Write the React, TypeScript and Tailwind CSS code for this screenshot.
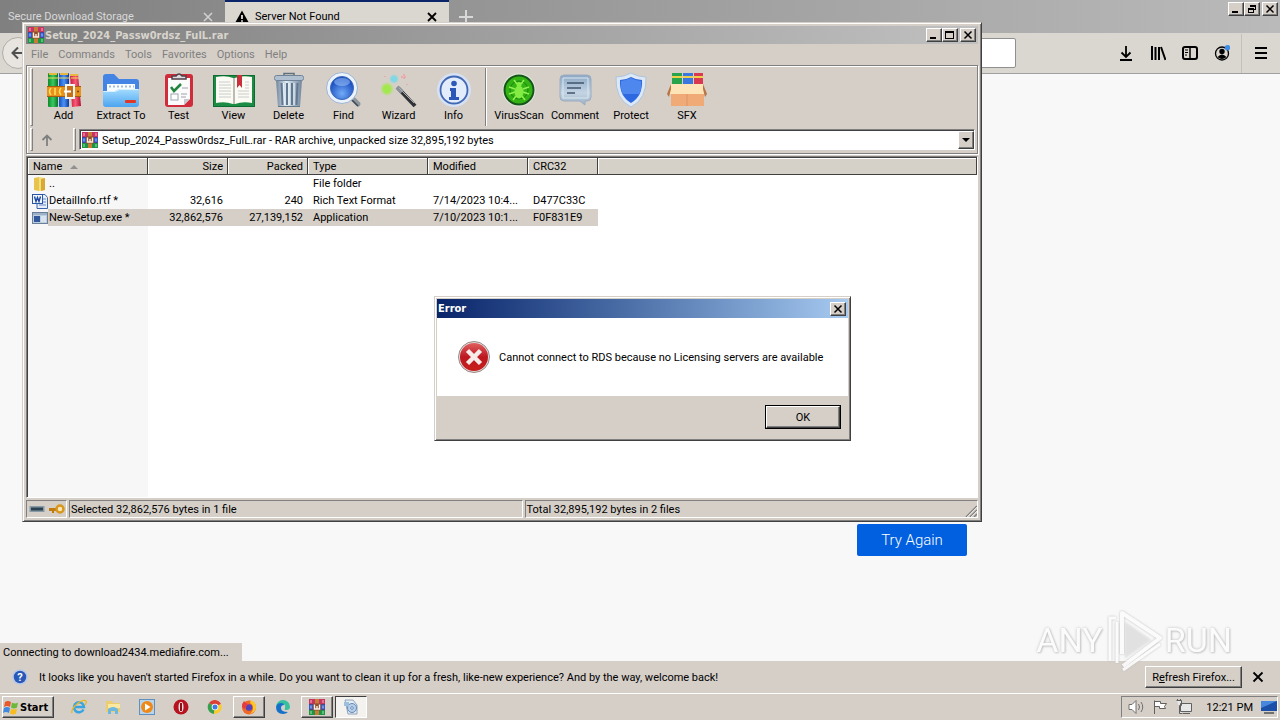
import React from "react";

const face = "bg-[#d5cfc8]";
const boldFace = "font-['DejaVu_Sans_Condensed','DejaVu_Sans',sans-serif] text-[11px] font-bold";
const raised =
  "border border-t-white border-l-white border-r-[#404040] border-b-[#404040] shadow-[inset_-1px_-1px_0_#808080] bg-[#d5cfc8]";
const frame =
  "border border-t-[#d5cfc8] border-l-[#d5cfc8] border-r-[#404040] border-b-[#404040] shadow-[inset_1px_1px_0_#fff,inset_-1px_-1px_0_#808080] bg-[#d5cfc8]";
const sunken = "border border-t-[#808080] border-l-[#808080] border-r-white border-b-white";

type IconProps = { className?: string };

function RarIcon({ className = "size-4" }: IconProps) {
  return (
    <svg viewBox="0 0 16 16" className={className} aria-hidden="true">
      <rect width="16" height="16" fill="#5a3560" />
      <rect x="0" y="0" width="16" height="5" fill="#c83462" />
      <rect x="0" y="5.500" width="16" height="5" fill="#3558c8" />
      <rect x="0" y="11" width="16" height="5" fill="#1e9444" />
      <path d="M2 1v3M14 1v3" stroke="#f0a0b8" strokeWidth="1.200" />
      <path d="M2 6.500v3M14 6.500v3" stroke="#98b4f8" strokeWidth="1.200" />
      <path d="M2 12v3M14 12v3" stroke="#84dc98" strokeWidth="1.200" />
      <rect x="6" y="0" width="4" height="16" fill="#c87c34" />
      <rect x="4" y="4.500" width="8" height="7" fill="#8c4c2c" />
      <path d="M5.500 5.500v4.500h5V5.500M8 7v3" fill="none" stroke="#fcf0e4" strokeWidth="1.400" />
    </svg>
  );
}

function AddIcon() {
  return (
    <svg viewBox="0 0 36 36" className="size-9" aria-hidden="true">
      <defs>
        <linearGradient id="bg1"><stop stopColor="#0c8a2c" /><stop offset=".5" stopColor="#3cc860" /><stop offset="1" stopColor="#087424" /></linearGradient>
        <linearGradient id="bb1"><stop stopColor="#1450c4" /><stop offset=".5" stopColor="#4a94f4" /><stop offset="1" stopColor="#1038a0" /></linearGradient>
        <linearGradient id="br1"><stop stopColor="#c41838" /><stop offset=".5" stopColor="#f85a78" /><stop offset="1" stopColor="#b01030" /></linearGradient>
      </defs>
      <rect x="2" y="1" width="10" height="34" rx="1" fill="url(#bg1)" />
      <rect x="13" y="1" width="10" height="34" rx="1" fill="url(#bb1)" />
      <path d="M24 2h8l3 32-9 1z" fill="url(#br1)" />
      <path d="M3 1h8v2H3zM14 1h8v2h-8zM24 2h8v2h-8z" fill="#e8b83c" />
      <path d="M2 6h10M13 6h10M25 6h8" stroke="#f4dc60" />
      <path d="M1 14h34v11H1z" fill="#e8921c" />
      <path d="M1 14.500h34M1 24.500h34" stroke="#a45c10" />
      <path d="M5 16q-3 3.500 0 7M9 16v7M15 16q-3 3.500 0 7" stroke="#ffe060" strokeWidth="1.500" fill="none" />
      <rect x="20" y="13" width="8" height="13" fill="#c47018" stroke="#f4f4f4" strokeWidth="2" />
      <path d="M18 19.500h7" stroke="#fff" strokeWidth="2" />
      <circle cx="32" cy="19.500" r="1" fill="#7a3c08" />
    </svg>
  );
}
function ExtractIcon() {
  return (
    <svg viewBox="0 0 38 36" className="h-9 w-[38px]" aria-hidden="true">
      <defs><linearGradient id="fo" x2="0" y2="1"><stop stopColor="#a4dcfe" /><stop offset="1" stopColor="#4ca4f0" /></linearGradient></defs>
      <path d="M1 5q0-3 3-3h8l5 5h17q3 0 3 3v20H1z" fill="#4484e4" />
      <path d="M5 12h28v14H5z" fill="#f8fcff" />
      <path d="M7 14.500h25" stroke="#a4bcd8" strokeWidth="2" strokeDasharray="2 2" />
      <path d="M1 19h12l4-2h20v15q0 3-3 3H4q-3 0-3-3z" fill="url(#fo)" />
      <path d="M1.500 19.500h12l4-2H36" stroke="#d8f0ff" fill="none" />
      <rect x="23" y="28" width="11" height="3" rx="1" fill="#e03828" />
    </svg>
  );
}
function TestIcon() {
  return (
    <svg viewBox="0 0 30 36" className="h-9 w-[30px]" aria-hidden="true">
      <rect x="1" y="2" width="28" height="33" rx="3" fill="#d02c3c" />
      <path d="M4 6h22v21l-6 6H4z" fill="#fbfbfb" />
      <path d="M26 27h-6v6z" fill="#c8c8d0" />
      <path d="M8 7V4h4q3-4 6 0h4v3z" fill="#dcdce0" stroke="#504048" strokeWidth="1.500" />
      <path d="M7 15l3 4 7-7" stroke="#20843c" strokeWidth="2.500" fill="none" />
      <rect x="7" y="22" width="7" height="6" fill="#fff" stroke="#a0a8b0" />
      <path d="M18 16h6M17 22h6M17 25h5" stroke="#a0a0ac" />
    </svg>
  );
}
function ViewIcon() {
  return (
    <svg viewBox="0 0 44 36" className="h-9 w-11" aria-hidden="true">
      <path d="M1 3h42v32H1z" fill="#1c8c44" />
      <path d="M1.500 3.500h41v31h-41z" stroke="#0a6c30" fill="none" />
      <path d="M4 5q10-2 17 1v26q-8-3-17-1zM40 5q-10-2-17 1v26q8-3 17-1z" fill="#fbfbf4" />
      <path d="M22 6v26" stroke="#bcbcb4" strokeWidth="2" />
      <path d="M7 10h11M7 13h12M7 16h12M7 19h12M7 22h12M7 25h12M26 19h11M26 22h11M26 25h11M33 10h4M33 13h4M33 16h4" stroke="#c8cccc" />
      <path d="M25 3h5v13l-2.500-3L25 16z" fill="#c8303c" />
    </svg>
  );
}
function DeleteIcon() {
  return (
    <svg viewBox="0 0 32 36" className="h-9 w-8" aria-hidden="true">
      <defs><linearGradient id="tr"><stop stopColor="#70849c" /><stop offset=".4" stopColor="#e0ecf4" /><stop offset="1" stopColor="#70849c" /></linearGradient></defs>
      <path d="M11 3.500V1.500h10v2" stroke="#607080" fill="none" strokeWidth="1.500" />
      <path d="M3 8h26l-2 27H5z" fill="url(#tr)" />
      <path d="M8.500 11l1 22M14 11v22M19 11v22M24.500 11l-1 22" stroke="#607890" strokeWidth="2" />
      <path d="M10.500 11l1 22M16 11v22M21 11v22" stroke="#edf6fb" />
      <rect x="1.500" y="3.500" width="29" height="5" rx="2" fill="#b0c0d0" stroke="#708498" />
      <path d="M5 34.500h22" stroke="#607888" />
    </svg>
  );
}
function FindIcon() {
  return (
    <svg viewBox="0 0 36 36" className="size-9" aria-hidden="true">
      <defs><radialGradient id="fi" cy=".7"><stop stopColor="#72acf8" /><stop offset="1" stopColor="#1c50c0" /></radialGradient></defs>
      <path d="M25 25l7 7" stroke="#8c949c" strokeWidth="5" strokeLinecap="round" />
      <path d="M25 27l7 7" stroke="#404850" strokeWidth="1.500" />
      <circle cx="16" cy="16" r="13.500" fill="url(#fi)" stroke="#eaf2fc" strokeWidth="4" />
      <circle cx="16" cy="16" r="11.500" fill="none" stroke="#3c68b8" />
      <circle cx="16" cy="16" r="15.500" fill="none" stroke="#a0b4d0" />
      <ellipse cx="16" cy="10" rx="8" ry="4" fill="#a8ccff" opacity=".5" />
    </svg>
  );
}
function WizardIcon() {
  return (
    <svg viewBox="0 0 36 36" className="size-9" aria-hidden="true">
      <defs>
        <radialGradient id="wg"><stop stopColor="#a4e850" /><stop offset=".5" stopColor="#a4e850" /><stop offset="1" stopColor="#a4e850" stopOpacity="0" /></radialGradient>
        <radialGradient id="wb"><stop stopColor="#80d8e4" /><stop offset=".5" stopColor="#80d8e4" /><stop offset="1" stopColor="#80d8e4" stopOpacity="0" /></radialGradient>
      </defs>
      <path d="M17 16L34 34" stroke="#303236" strokeWidth="4" />
      <path d="M16 15l5 5" stroke="#8c9098" strokeWidth="4" />
      <path d="M18 16L33 31" stroke="#a8acb4" />
      <circle cx="6" cy="17" r="7" fill="url(#wg)" />
      <circle cx="13" cy="7" r="5" fill="url(#wb)" />
      <path d="M23 2v6M20 5h6M4 4v1M26 12v1" stroke="#f0a0a4" strokeWidth="1.500" strokeDasharray="2 1" />
    </svg>
  );
}
function InfoIcon() {
  return (
    <svg viewBox="0 0 36 36" className="size-9" aria-hidden="true">
      <circle cx="18" cy="18" r="17" fill="#d6e1f4" />
      <circle cx="18" cy="18" r="13.500" fill="#e2ecfa" stroke="#4068b4" strokeWidth="1.800" />
      <circle cx="18" cy="11.500" r="2.800" fill="#2c58b8" />
      <path d="M14 16h6v9h3v3H13v-3h2v-6h-1z" fill="#2c58b8" />
    </svg>
  );
}
function VirusIcon() {
  return (
    <svg viewBox="0 0 36 36" className="size-9" aria-hidden="true">
      <circle cx="18" cy="18" r="16.500" fill="#e4ecdf" />
      <circle cx="18" cy="18" r="14.500" fill="#34b414" stroke="#17551b" strokeWidth="2" />
      <circle cx="18" cy="18" r="9" fill="none" stroke="#188410" />
      <g stroke="#92f052" strokeWidth="1.500" fill="none">
        <path d="M13 8l3 4M23 8l-3 4M8 15l6 2M28 15l-6 2M8 22l6-2M28 22l-6-2M12 28l3-4M24 28l-3-4" />
      </g>
      <circle cx="18" cy="12.500" r="2.500" fill="#84ea44" />
      <ellipse cx="18" cy="20" rx="4.500" ry="6.500" fill="#84ea44" />
    </svg>
  );
}
function CommentIcon() {
  return (
    <svg viewBox="0 0 36 36" className="size-9" aria-hidden="true">
      <defs><linearGradient id="co" x2="0" y2="1"><stop stopColor="#8ca8c4" /><stop offset=".6" stopColor="#c4d4e4" /><stop offset="1" stopColor="#9cb0c4" /></linearGradient></defs>
      <path d="M7 3h23q4 0 4 4v18q0 4-4 4h-2v4l-5-4H7q-4 0-4-4V7q0-4 4-4z" fill="url(#co)" stroke="#9cacc0" />
      <path d="M6 6h25v20H6z" fill="none" stroke="#dae8f2" />
      <path d="M10 11h17M10 16h14M10 21h8" stroke="#40546c" strokeWidth="1.500" />
    </svg>
  );
}
function ProtectIcon() {
  return (
    <svg viewBox="0 0 36 36" className="size-9" aria-hidden="true">
      <path d="M18 1q7 4 15 4 1 22-15 30Q2 27 3 5q8 0 15-4z" fill="#dce8f6" stroke="#b0c4dc" />
      <path d="M18 5q5 3 11 3 1 16-11 23Q6 24 7 8q6 0 11-3z" fill="#2d68e0" />
      <path d="M18 6q5 3 10 3 1 9-2 13H10Q7 17 8 9q6-1 10-3z" fill="#5c94f4" opacity=".7" />
    </svg>
  );
}
function SfxIcon() {
  return (
    <svg viewBox="0 0 40 36" className="h-9 w-10" aria-hidden="true">
      <path d="M5 1h10v14H5z" fill="#28a44c" /><path d="M16 1h10v14H16z" fill="#3a78e0" /><path d="M27 1h9v14h-9z" fill="#d83850" />
      <path d="M5 5h10M16 5h10M27 5h9" stroke="#f0d048" strokeWidth="2" />
      <path d="M4 16h33v18H4z" fill="#f0aa78" />
      <path d="M4 12h32l3 10H1z" fill="#fce4b8" />
      <path d="M4 12L0 22l2 3 2-8zM36 12l4 10-2 3-2-8z" fill="#b87444" />
      <path d="M20 22v12" stroke="#dc9464" />
    </svg>
  );
}

const tools = [
  { label: "Add", icon: AddIcon },
  { label: "Extract To", icon: ExtractIcon, wide: true },
  { label: "Test", icon: TestIcon },
  { label: "View", icon: ViewIcon },
  { label: "Delete", icon: DeleteIcon },
  { label: "Find", icon: FindIcon },
  { label: "Wizard", icon: WizardIcon },
  { label: "Info", icon: InfoIcon },
];
const extras = [
  { label: "VirusScan", icon: VirusIcon },
  { label: "Comment", icon: CommentIcon },
  { label: "Protect", icon: ProtectIcon },
  { label: "SFX", icon: SfxIcon },
];

function ToolButton({ label, icon: Icon, width }: { label: string; icon: () => React.ReactElement; width: string }) {
  return (
    <button className={`flex flex-col items-center whitespace-nowrap ${width}`}>
      <Icon />
      <span className="leading-4">{label}</span>
    </button>
  );
}

function CaptionButton({ kind, label }: { kind: "min" | "max" | "restore" | "close"; label: string }) {
  return (
    <button aria-label={label} className={`flex h-3.5 w-4 items-center justify-center ${raised}`}>
      <svg viewBox="0 0 12 10" className="h-2.5 w-3" fill="none" stroke="#000" shapeRendering="crispEdges" aria-hidden="true">
        {kind === "min" && <path d="M2 8h6" strokeWidth="2" />}
        {kind === "max" && <path d="M1.500 1.500h8v7h-8zM1 2h9" />}
        {kind === "restore" && <path d="M4.500 3V1.500h5v4H8M4 2h6M2.500 4.500h5v4h-5zM2 5h6" />}
        {kind === "close" && <path d="M2.500 1.500l7 7M9.500 1.500l-7 7" strokeWidth="1.500" shapeRendering="auto" />}
      </svg>
    </button>
  );
}

function Grip() {
  return <span className="w-[3px] self-stretch border border-t-white border-l-white border-r-[#808080] border-b-[#808080]" />;
}

function FolderIcon() {
  return (
    <svg viewBox="0 0 16 16" className="size-4" aria-hidden="true">
      <path d="M2 2l5-1v14l-5-1z" fill="#e8c44c" /><path d="M7 1l6 1v12l-6 1z" fill="#f6de7c" /><path d="M9 3l4-1v12l-4 1z" fill="#d8aa34" />
    </svg>
  );
}
function DocIcon() {
  return (
    <svg viewBox="0 0 16 16" className="size-4" aria-hidden="true">
      <path d="M5 1.500h8l2.500 3v11H5z" fill="#e8f0fc" stroke="#3c64a8" />
      <path d="M11 6h3M11 9h3M7 12h7" stroke="#6888c0" />
      <rect x=".5" y="1.500" width="10" height="9" fill="#f4f8ff" stroke="#2c56a4" />
      <path d="M2.500 3.500l1.500 5 1.500-4 1.500 4 1.500-5" fill="none" stroke="#1c48a0" strokeWidth="1.400" />
    </svg>
  );
}
function ExeIcon() {
  return (
    <svg viewBox="0 0 16 16" className="size-4" aria-hidden="true">
      <rect x=".5" y="2.500" width="15" height="11" fill="#bed0e0" stroke="#6b8098" />
      <path d="M1 4h14" stroke="#90a8c0" strokeWidth="1.500" />
      <rect x="2" y="6" width="6" height="6" fill="#31589b" /><path d="M9 7h5M9 9h5M9 11h5" stroke="#f4f8fc" />
    </svg>
  );
}

const rows = [
  { name: "..", icon: FolderIcon, size: "", packed: "", type: "File folder", modified: "", crc: "" },
  { name: "DetailInfo.rtf *", icon: DocIcon, size: "32,616", packed: "240", type: "Rich Text Format", modified: "7/14/2023 10:4...", crc: "D477C33C" },
  { name: "New-Setup.exe *", icon: ExeIcon, size: "32,862,576", packed: "27,139,152", type: "Application", modified: "7/10/2023 10:1...", crc: "F0F831E9", selected: true },
];

function FileTable() {
  const head =
    "h-[17px] px-[5px] font-normal bg-[#d5d1c8] shadow-[inset_-1px_-1px_0_#404040,inset_1px_1px_0_#fff]";
  return (
    <table className="w-full table-fixed border-collapse text-left leading-[17px] whitespace-nowrap">
      <colgroup>
        <col className="w-[120px]" />
        <col className="w-20" />
        <col className="w-20" />
        <col className="w-[120px]" />
        <col className="w-[100px]" />
        <col className="w-[70px]" />
        <col />
      </colgroup>
      <thead>
        <tr>
          <th className={head}>
            <span className="flex items-center gap-2">
              Name
              <svg viewBox="0 0 8 4" className="h-1 w-2" aria-hidden="true"><path d="M0 4l4-4 4 4z" fill="#909090" /></svg>
            </span>
          </th>
          <th className={`${head} text-right`}>Size</th>
          <th className={`${head} text-right`}>Packed</th>
          <th className={head}>Type</th>
          <th className={head}>Modified</th>
          <th className={head}>CRC32</th>
          <td className={head} />
        </tr>
      </thead>
      <tbody>
        {rows.map(({ name, icon: Icon, size, packed, type, modified, crc, selected }) => {
          const cell = `h-[17px] px-[5px] ${selected ? face : ""}`;
          return (
            <tr key={name}>
              <td className="h-[17px] p-0 pl-1">
                <span className="flex h-[17px] items-center">
                  <Icon />
                  <span className={`h-full flex-1 pl-px ${selected ? face : ""}`}>{name}</span>
                </span>
              </td>
              <td className={`${cell} text-right`}>{size}</td>
              <td className={`${cell} text-right`}>{packed}</td>
              <td className={cell}>{type}</td>
              <td className={cell}>{modified}</td>
              <td className={cell}>{crc}</td>
              <td />
            </tr>
          );
        })}
      </tbody>
    </table>
  );
}

function ArchiveWindow() {
  return (
    <section aria-label="Archive" className={`absolute top-[22px] left-[22px] flex h-[500px] w-[960px] flex-col p-[3px] ${frame}`}>
      <header className="flex h-[18px] shrink-0 items-center bg-linear-to-r from-[#808080] to-[#c0c0c0] pl-0.5 text-[#d8d4cc]">
        <RarIcon />
        <h1 className={`flex-1 pl-px ${boldFace}`}>Setup_2024_Passw0rdsz_FulL.rar</h1>
        <div className="flex pr-0.5">
          <CaptionButton kind="min" label="Minimize" />
          <CaptionButton kind="max" label="Maximize" />
          <span className="w-0.5" />
          <CaptionButton kind="close" label="Close" />
        </div>
      </header>
      <nav className="flex h-[21px] shrink-0 items-center gap-2.5 pl-[5px] text-[#808080]">
        {["File", "Commands", "Tools", "Favorites", "Options", "Help"].map((m) => (
          <button key={m}>{m}</button>
        ))}
      </nav>
      <div className="flex shrink-0 flex-col border border-[#808080] shadow-[inset_1px_1px_0_#fff,1px_1px_0_#fff]">
        <div className="flex h-[62px] items-center py-0.5 pl-[3px]">
          <Grip />
          <div className="flex pt-px pl-[3px]">
            {tools.map((t) => (
              <ToolButton key={t.label} label={t.label} icon={t.icon} width={t.wide ? "w-[60px]" : "w-[55px]"} />
            ))}
          </div>
          <span className="mx-1 w-0.5 self-stretch border-r border-l border-r-white border-l-[#808080]" />
          <div className="flex pt-px">
            {extras.map((t) => (
              <ToolButton key={t.label} label={t.label} icon={t.icon} width="w-14" />
            ))}
          </div>
        </div>
        <div className="flex h-[25px] items-center pr-0.5 pb-0.5 pl-[3px]">
          <Grip />
          <button aria-label="Up one level" className="flex w-10 items-center pl-2">
            <svg viewBox="0 0 12 12" className="size-3" fill="none" stroke="#808080" strokeWidth="1.800" aria-hidden="true"><path d="M6 12V2M1.500 6L6 1.500 10.500 6" /></svg>
          </button>
          <Grip />
          <div className="relative ml-[3px] flex h-[21px] flex-1 items-center border border-t-[#808080] border-l-[#808080] border-r-white border-b-white bg-white pl-0.5 shadow-[inset_1px_1px_0_#404040]">
            <RarIcon />
            <select aria-label="Archive path" className="h-full flex-1 appearance-none bg-transparent pt-0.5 pl-1 outline-none">
              <option>Setup_2024_Passw0rdsz_FulL.rar - RAR archive, unpacked size 32,895,192 bytes</option>
            </select>
            <span className={`pointer-events-none absolute top-px right-0 flex h-[18px] w-4 items-center justify-center ${raised}`}>
              <svg viewBox="0 0 8 4" className="h-1 w-2" aria-hidden="true"><path d="M0 0h8L4 4z" /></svg>
            </span>
          </div>
        </div>
      </div>
      <div className="mt-0.5 flex min-h-0 flex-1 border border-t-[#808080] border-l-[#808080] border-r-white border-b-white">
        <div className="min-w-0 flex-1 border-t border-l border-[#404040] bg-[linear-gradient(90deg,#f7f7f7_120px,#fff_120px)]">
          <FileTable />
        </div>
      </div>
      <footer className="mt-0.5 flex h-[18px] shrink-0 gap-0.5">
        <div className={`flex w-[41px] items-center justify-center gap-1 ${sunken}`}>
          <svg viewBox="0 0 16 8" className="h-2 w-4" aria-hidden="true"><rect x=".5" y="1" width="15" height="6" fill="#8a9aa6" /><rect x="2" y="2.500" width="12" height="3" fill="#2b4252" /></svg>
          <svg viewBox="0 0 16 12" className="h-3 w-4" aria-hidden="true"><path d="M0 5h9v3H5v2H3V8H0z" fill="#c07c10" /><circle cx="11" cy="6" r="3.500" fill="#f8e8b8" stroke="#d8961c" strokeWidth="2.500" /></svg>
        </div>
        <div className={`flex flex-1 items-center pl-px ${sunken}`}>Selected 32,862,576 bytes in 1 file</div>
        <div className={`flex flex-1 items-center justify-between pl-px ${sunken}`}>
          Total 32,895,192 bytes in 2 files
          <svg viewBox="0 0 12 12" className="size-3 self-end" aria-hidden="true"><path d="M1 12L12 1M5 12l7-7M9 12l3-3" stroke="#808080" strokeWidth="1.500" /><path d="M2 12L12 2M6 12l6-6" stroke="#fff" strokeWidth=".7" /></svg>
        </div>
      </footer>
    </section>
  );
}

function ErrorDialog() {
  return (
    <section role="dialog" aria-labelledby="error-title" className={`absolute top-[296px] left-[434px] flex w-[417px] flex-col p-0.5 ${frame}`}>
      <header className="flex h-[19px] items-center justify-between bg-linear-to-r from-[#0a246a] to-[#a6caf0] pr-0.5 pl-px text-white">
        <h2 id="error-title" className={boldFace}>Error</h2>
        <CaptionButton kind="close" label="Close dialog" />
      </header>
      <div className="flex h-[78px] items-center gap-2 bg-white pl-5">
        <svg viewBox="0 0 34 34" className="size-[34px]" aria-hidden="true">
          <defs><linearGradient id="er" x2="0" y2="1"><stop stopColor="#e06060" /><stop offset=".5" stopColor="#bc1820" /><stop offset="1" stopColor="#c8201c" /></linearGradient></defs>
          <circle cx="17" cy="17" r="15.500" fill="#e2dcdc" stroke="#9c8888" />
          <circle cx="17" cy="17" r="14" fill="url(#er)" />
          <path d="M10.500 10.500l13 13M23.500 10.500l-13 13" stroke="#f8ece8" strokeWidth="4.500" />
        </svg>
        <p>Cannot connect to RDS because no Licensing servers are available</p>
      </div>
      <div className="flex h-[42px] items-center justify-end pr-[7px]">
        <button className="h-6 w-[76px] border border-black p-0">
          <span className={`flex h-full items-center justify-center ${raised}`}>OK</span>
        </button>
      </div>
    </section>
  );
}

function Browser() {
  return (
    <div className="flex flex-1 flex-col">
      <header className="flex h-[33px] shrink-0 bg-linear-to-r from-[#808080] to-[#bababa]">
        <div className="flex w-[225px] items-center justify-between pr-3 pl-2 text-[#d8d8d8]">
          <button>Secure Download Storage</button>
          <button aria-label="Close Secure Download Storage">
            <svg viewBox="0 0 10 10" className="size-2.5" stroke="#d0d0d0" strokeWidth="1.600" aria-hidden="true"><path d="M1 1l8 8M9 1L1 9" /></svg>
          </button>
        </div>
        <div className="flex w-56 items-center border-t-2 border-[#0a246a] bg-[#dad6d0] pr-3 pb-0.5 pl-2.5">
          <svg viewBox="0 0 14 14" className="size-3.5" aria-hidden="true"><path d="M7 .5L14 13H0z" /><path d="M7 5v4M7 10.200v1.500" stroke="#fff" strokeWidth="1.600" /></svg>
          <button className="flex-1 pl-1.5 text-left">Server Not Found</button>
          <button aria-label="Close Server Not Found">
            <svg viewBox="0 0 10 10" className="size-2.5" stroke="#000" strokeWidth="1.800" aria-hidden="true"><path d="M1 1l8 8M9 1L1 9" /></svg>
          </button>
        </div>
        <button aria-label="New tab" className="px-2.5">
          <svg viewBox="0 0 14 14" className="size-3.5" stroke="#d8d8d8" strokeWidth="2" aria-hidden="true"><path d="M7 0v14M0 7h14" /></svg>
        </button>
        <div className="ml-auto flex pt-0.5 pr-0.5">
          <CaptionButton kind="min" label="Minimize browser" />
          <CaptionButton kind="restore" label="Restore browser" />
          <span className="w-0.5" />
          <CaptionButton kind="close" label="Close browser" />
        </div>
      </header>
      <div className="flex h-[41px] shrink-0 items-center border-b border-[#a0a0a0] bg-[#dad6d0] pl-0.5">
        <button aria-label="Back" className="flex size-8 items-center justify-center rounded-full border border-[#b0aca6] bg-[#e8e5e1]">
          <svg viewBox="0 0 14 14" className="size-3.5" fill="none" stroke="#505050" strokeWidth="2" aria-hidden="true"><path d="M14 7H2M7 1.500L1.500 7 7 12.500" /></svg>
        </button>
        <input aria-label="Address" className="ml-[100px] h-[30px] flex-1 rounded-xs border border-[#909090] bg-white px-2 outline-none" />
        <div className="ml-[102px] flex items-center gap-4">
          <button aria-label="Downloads"><svg viewBox="0 0 16 16" className="size-4" fill="none" stroke="#000" strokeWidth="1.800" aria-hidden="true"><path d="M8 1v11M3.500 7.500L8 12l4.500-4.500M2 15h12" /></svg></button>
          <button aria-label="Library"><svg viewBox="0 0 16 16" className="size-4" fill="none" stroke="#000" strokeWidth="2" aria-hidden="true"><path d="M2 1v14M5.500 2v13M9 2v13M11 2l4.500 13" /></svg></button>
          <button aria-label="Sidebar"><svg viewBox="0 0 16 16" className="size-4" fill="none" stroke="#000" strokeWidth="2" aria-hidden="true"><rect x="1" y="2" width="14" height="12" rx="2" /><path d="M8 2v12" strokeWidth="1.500" /><path d="M3 5h3M3 7.500h3M3 10h2" strokeWidth="1" /></svg></button>
          <button aria-label="Account"><svg viewBox="0 0 16 16" className="size-4" aria-hidden="true"><circle cx="8" cy="8.500" r="6.500" fill="none" stroke="#000" strokeWidth="1.300" /><circle cx="8" cy="6.500" r="2.700" /><path d="M3.500 12q4.500-5 9 0-4.500 4-9 0z" /><circle cx="13.500" cy="2.800" r="2.700" fill="#3c8ce8" /></svg></button>
        </div>
        <div className="mr-3 ml-[11px] flex h-[39px] items-center border-l border-[#c4c0ba] pl-3">
          <button aria-label="Menu"><svg viewBox="0 0 14 14" className="size-3.5" stroke="#000" strokeWidth="2" aria-hidden="true"><path d="M1 2h12M1 7h12M1 12h12" /></svg></button>
        </div>
      </div>
      <main className="relative flex-1 bg-[#f8f8f8]">
        <div className="mx-auto flex max-w-[654px] justify-end pt-[450px]">
          <button className="h-8 w-[110px] rounded-xs bg-[#0060df] text-[15px] font-light text-white">Try Again</button>
        </div>
        <div className="absolute bottom-0 left-0 flex h-[18px] w-[242px] items-center bg-[#d5cfc8] pl-[3px]">Connecting to download2434.mediafire.com...</div>
      </main>
      <aside className={`flex h-8 shrink-0 items-center pr-4 pl-3 ${face}`}>
        <svg viewBox="0 0 16 16" className="size-4" aria-hidden="true">
          <circle cx="8" cy="8" r="7" fill="#2858b8" stroke="#b8c8e8" strokeWidth="1.500" />
          <text x="8" y="12" textAnchor="middle" fontSize="11" fontWeight="bold" fill="#fff">?</text>
        </svg>
        <p className="flex-1 pl-[11px]">It looks like you haven't started Firefox in a while. Do you want to clean it up for a fresh, like-new experience? And by the way, welcome back!</p>
        <button className={`mr-2.5 h-[22px] w-[97px] ${raised}`}>R<u>e</u>fresh Firefox...</button>
        <button aria-label="Dismiss"><svg viewBox="0 0 12 12" className="size-3" stroke="#000" strokeWidth="1.800" aria-hidden="true"><path d="M1.500 1.500l9 9M10.500 1.500l-9 9" /></svg></button>
      </aside>
    </div>
  );
}

function Watermark() {
  return (
    <div className="pointer-events-none absolute right-12 bottom-[46px] flex h-[68px] items-center font-[Roboto,sans-serif] text-[34px] leading-10 font-normal text-[#fcfcfc] opacity-90 [text-shadow:0_0_3px_#b8b8b8,1px_1px_2px_#c8c8c8]">
      <span>ANY</span>
      <svg viewBox="0 0 62 68" className="h-[68px] w-[62px] drop-shadow-[0_0_1px_#b8b8b8]" fill="none" stroke="#fcfcfc" aria-hidden="true">
        <path d="M19 48V7l38 25-37 28" strokeWidth="4" strokeLinejoin="round" />
        <path d="M7 55V12h6M14 16v41M20 64l37-26" strokeWidth="3" />
        <path d="M22 52l26-18-26-18z" stroke="none" fill="#e6e6e6" opacity=".5" />
      </svg>
      <span>RUN</span>
    </div>
  );
}

function Taskbar() {
  return (
    <footer className={`flex h-[27px] shrink-0 items-center border-t border-white pr-0.5 pl-0.5 ${face}`}>
      <button className={`flex h-[22px] w-[52px] items-center gap-px ${boldFace} ${raised}`}>
        <svg viewBox="0 0 16 16" className="size-4 shrink-0" aria-hidden="true">
          <path d="M2 3q3-2 6 0L7 8Q4 6 1 8z" fill="#e8582c" /><path d="M9 3.500q3 2 6 0l-1 5q-3 2-6 0z" fill="#6cb838" />
          <path d="M1 9q3-2 6 0l-1 5q-3-2-6 0z" fill="#4088e0" /><path d="M8 9.500q3 2 6 0l-1 5q-3 2-6 0z" fill="#f8bc1c" />
        </svg>
        Start
      </button>
      <div className="flex items-center gap-[18px] pl-[17px]">
        <button aria-label="Internet Explorer"><svg viewBox="0 0 16 16" className="size-4" aria-hidden="true"><path d="M12.500 10.500A5 5 0 1 1 13 8H4" fill="none" stroke="#38a4e4" strokeWidth="2.500" /><path d="M1 14Q0 10 6 5T15 2q1 1-1 4" fill="none" stroke="#e8b820" strokeWidth="1.300" /></svg></button>
        <button aria-label="Explorer"><svg viewBox="0 0 16 16" className="size-4" aria-hidden="true"><path d="M1 2h6l1 2h7v9H1z" fill="#eccc6c" /><path d="M3 5h12v4H3z" fill="#f8e8a0" /><path d="M3 15V10q5-4 10 0v5h-3v-3H6v3z" fill="#6cb8e0" /></svg></button>
        <button aria-label="Media Player"><svg viewBox="0 0 16 16" className="size-4" aria-hidden="true"><rect x=".5" y=".5" width="15" height="15" fill="#b8d4ec" stroke="#6090bc" /><circle cx="8" cy="8" r="6" fill="#f08818" /><path d="M6 4.500L11.500 8 6 11.500z" fill="#fff" /></svg></button>
        <button aria-label="Opera"><svg viewBox="0 0 16 16" className="size-4" aria-hidden="true"><circle cx="8" cy="8" r="7.500" fill="#b81420" /><ellipse cx="8" cy="8" rx="2.500" ry="5" fill="#f4e0e0" /><path d="M8 4v8" stroke="#8c1018" strokeWidth="2" /></svg></button>
        <button aria-label="Chrome"><svg viewBox="0 0 16 16" className="size-4" aria-hidden="true"><path d="M8 8L2 4a7 7 0 0 1 12 1z" fill="#dc4034" /><path d="M8 8L2 4a7 7 0 0 0 5 11z" fill="#38a04c" /><path d="M8 8l6-3a7 7 0 0 1-7 10z" fill="#f8cc30" /><circle cx="8" cy="8" r="3.300" fill="#fff" /><circle cx="8" cy="8" r="2.500" fill="#3c7ce4" /></svg></button>
      </div>
      <button aria-label="Firefox" className={`ml-2.5 flex h-[22px] w-8 items-center justify-center ${raised}`}>
        <svg viewBox="0 0 16 16" className="size-4" aria-hidden="true"><circle cx="8" cy="8.500" r="7" fill="#f06828" /><path d="M10 1q6 3 5 8t-7 6q4-2 4-6t-3-5z" fill="#fcc82c" /><circle cx="8" cy="8.500" r="3.300" fill="#5440b8" /><path d="M1 8q0-4 2-6 1 2 4 3L5 8l-2 2z" fill="#e43c40" /></svg>
      </button>
      <button aria-label="Edge" className="ml-2.5">
        <svg viewBox="0 0 16 16" className="size-4" aria-hidden="true"><path d="M1 8a7 7 0 0 1 14 0q0 3-4 3-2 0-1-2 1-4-3-4-5 0-6 3z" fill="#36c0a0" /><path d="M1 8q1-4 5-4 3 0 3 2-3 0-3 3 0 4 7 4-2 2-5 2-7 0-7-7z" fill="#1670c8" /></svg>
      </button>
      <button aria-label="WinRAR" className={`ml-2.5 flex h-[22px] w-8 items-center justify-center ${raised}`}><RarIcon /></button>
      <button aria-label="Setup" className="ml-0.5 flex h-[22px] w-8 items-center justify-center border border-t-[#404040] border-l-[#404040] border-r-white border-b-white bg-[#f4f2ef]">
        <svg viewBox="0 0 16 16" className="size-4" aria-hidden="true"><path d="M2 1h8l4 5v9H5z" fill="#e4ecf4" stroke="#90a4bc" /><circle cx="9" cy="9" r="4.500" fill="#b4d0ec" stroke="#6888b4" /><circle cx="9" cy="9" r="1.300" fill="#fff" stroke="#6888b4" /><path d="M1 3h5v4H1z" fill="#9cc0dc" /></svg>
      </button>
      <div className={`ml-auto flex h-[22px] items-center pl-1.5 ${sunken}`}>
        <svg viewBox="0 0 16 16" className="size-4" fill="#fff" stroke="#707070" aria-hidden="true"><path d="M1 5.500h3l4-4v13l-4-4H1z" /><path d="M10.500 5q2 3 0 6M13 3q3.500 5 0 10" fill="none" /></svg>
        <svg viewBox="0 0 16 16" className="ml-2 size-4" fill="#fff" stroke="#606060" aria-hidden="true"><path d="M2.500 15V1.500M2.500 2.500h6v2h6l-2 3 1 2h-6v-2h-5" /></svg>
        <svg viewBox="0 0 16 16" className="ml-2 size-4" fill="#e8e8e8" stroke="#606060" aria-hidden="true"><path d="M4.500 4.500h11v8h-11zM7 14.500h7M.5 1.500h5v5h-2v8h3M1.500 0v2M4.500 0v2" /></svg>
        <time className="ml-3.5 whitespace-nowrap">12:21 PM</time>
        <svg viewBox="0 0 16 14" className="ml-2 h-3.5 w-4" aria-hidden="true"><rect y="1" width="16" height="10" fill="#1c50a8" /><path d="M0 1h16L0 8z" fill="#4888dc" /><path d="M3 13h10" stroke="#707070" strokeWidth="2" /></svg>
      </div>
    </footer>
  );
}

export default function App() {
  return (
    <div className="relative flex min-h-screen flex-col overflow-hidden font-[Roboto,'Noto_Sans',sans-serif] text-[11px] leading-[15px] text-black">
      <Browser />
      <Taskbar />
      <Watermark />
      <ArchiveWindow />
      <ErrorDialog />
    </div>
  );
}
